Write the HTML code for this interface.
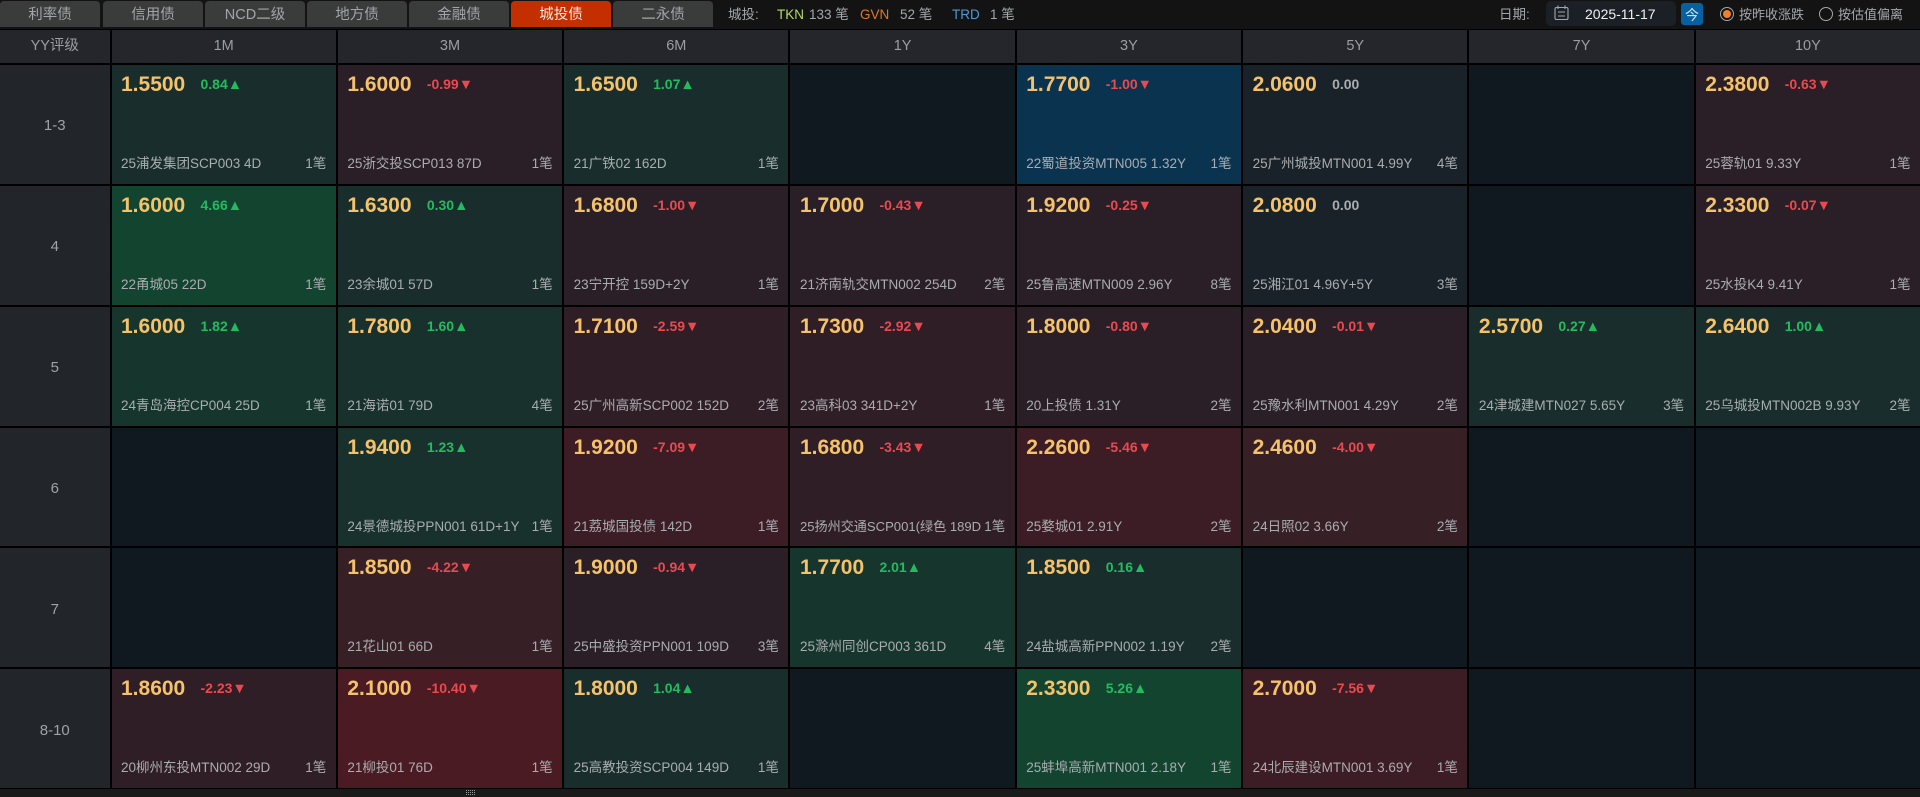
<!DOCTYPE html>
<html lang="zh"><head><meta charset="utf-8"><title>城投债</title>
<style>
*{box-sizing:border-box;margin:0;padding:0}
html,body{width:1920px;height:797px;overflow:hidden;background:#000;font-family:"Liberation Sans","Noto Sans CJK SC",sans-serif;color:#a9adb0}
.top{position:absolute;left:0;top:0;width:1920px;height:29px;background:#131313}
.tab{position:absolute;top:1px;width:100px;height:26px;background:#3a3c3c;border-radius:4px 4px 0 0;text-align:center;font-size:14.5px;line-height:29px;color:#a2a5a6}
.tab.on{background:#c42f00;color:#f5e8e0}
.t{position:absolute;top:6px;font-size:13.5px;line-height:17px;white-space:nowrap;color:#a4a7a9}
.datebox{position:absolute;left:1546px;top:1px;width:130px;height:25px;background:#1b2026;border-radius:5px}
.today{position:absolute;left:1681px;top:3px;width:22px;height:22px;background:#07609f;border-radius:3px}
.radio{position:absolute;top:7px;width:14px;height:14px;border:1px solid #a4a7a9;border-radius:50%}
.radio.on:after{content:"";position:absolute;left:2px;top:2px;width:8px;height:8px;border-radius:50%;background:#f07f27}
.grid{position:absolute;left:0;top:30px;width:1920px;height:758px;display:grid;grid-template-columns:109.5px repeat(8,1fr);grid-template-rows:33px repeat(6,1fr);gap:2px;background:#000}
.h{background:#24262b;text-align:center;font-size:14.5px;line-height:33px;color:#9a9ea1}
.l{background:#222529;display:flex;align-items:center;justify-content:center;font-size:15px;color:#9fa3a6;padding-top:3px}
.c{position:relative;overflow:hidden;white-space:nowrap;background:#111920}
.c b{position:absolute;left:9.5px;top:6px;font-size:21px;line-height:27px;font-weight:700;color:#f5c26c}
.c i{position:absolute;left:89px;top:11px;font-style:normal;font-weight:700;font-size:14px;line-height:17px;color:#24bb60}
.c i.d{color:#ea4950}
.c i.z{color:#a9adb0}
.c em{font-style:normal;font-size:14.5px;line-height:17px}
.c u{position:absolute;left:9.5px;top:90px;text-decoration:none;font-size:13.5px;line-height:18px;color:#a9adb0}
.c u.x{font-size:13.1px}
.c s{position:absolute;right:9.5px;top:90px;text-decoration:none;font-size:13.5px;line-height:18px;color:#a9adb0}
.n{background:#1a2229}.b{background:#0a3350}
.g1{background:#192e2c}.g2{background:#18312c}.g3{background:#124430}.g4{background:#16362d}
.r1{background:#2b1f27}.r2{background:#301e27}.r3{background:#371f26}.r4{background:#3d1d25}.r5{background:#4a1b23}
.bot{position:absolute;left:0;top:789px;width:1920px;height:8px;background:#1a1a1a}
</style></head><body>
<div class="top">
<div class="tab" style="left:0">利率债</div>
<div class="tab" style="left:103px">信用债</div>
<div class="tab" style="left:205px">NCD二级</div>
<div class="tab" style="left:307px">地方债</div>
<div class="tab" style="left:409px">金融债</div>
<div class="tab on" style="left:511px">城投债</div>
<div class="tab" style="left:613px">二永债</div>
<div class="t" style="left:728px">城投:</div>
<div class="t" style="left:777px;color:#b5d96a">TKN</div>
<div class="t" style="left:809px">133 笔</div>
<div class="t" style="left:860px;color:#e07a20">GVN</div>
<div class="t" style="left:900px">52 笔</div>
<div class="t" style="left:952px;color:#4a9ad8">TRD</div>
<div class="t" style="left:990px">1 笔</div>
<div class="t" style="left:1499px">日期:</div>
<div class="datebox"></div>
<svg style="position:absolute;left:1554px;top:5px" width="15" height="15" viewBox="0 0 15 15" fill="none" stroke="#a4a7a9" stroke-width="1.1"><rect x="1" y="2.5" width="13" height="12" rx="1.5"/><path d="M4 .5v3.5M11 .5v3.5M4 7h7M4 11h7"/></svg>
<div class="t" style="left:1585px;color:#f0f0f0;font-size:14px">2025-11-17</div>
<div class="today"></div>
<div class="t" style="left:1685px;top:7px;color:#cfe2f0;font-size:14px">今</div>
<div class="radio on" style="left:1720px"></div>
<div class="t" style="left:1739px;font-size:13px">按昨收涨跌</div>
<div class="radio" style="left:1819px"></div>
<div class="t" style="left:1838px;font-size:13px">按估值偏离</div>
</div>
<div class="grid">
<div class="h">YY评级</div><div class="h">1M</div><div class="h">3M</div><div class="h">6M</div><div class="h">1Y</div><div class="h">3Y</div><div class="h">5Y</div><div class="h">7Y</div><div class="h">10Y</div>

<div class="l">1-3</div>
<div class="c g1"><b>1.5500</b><i>0.84<em>▲</em></i><u>25浦发集团SCP003 4D</u><s>1笔</s></div>
<div class="c r1"><b>1.6000</b><i class="d">-0.99<em>▼</em></i><u>25浙交投SCP013 87D</u><s>1笔</s></div>
<div class="c g1"><b>1.6500</b><i>1.07<em>▲</em></i><u>21广铁02 162D</u><s>1笔</s></div>
<div class="c"></div>
<div class="c b"><b>1.7700</b><i class="d">-1.00<em>▼</em></i><u>22蜀道投资MTN005 1.32Y</u><s>1笔</s></div>
<div class="c n"><b>2.0600</b><i class="z">0.00</i><u>25广州城投MTN001 4.99Y</u><s>4笔</s></div>
<div class="c"></div>
<div class="c r1"><b>2.3800</b><i class="d">-0.63<em>▼</em></i><u>25蓉轨01 9.33Y</u><s>1笔</s></div>

<div class="l">4</div>
<div class="c g3"><b>1.6000</b><i>4.66<em>▲</em></i><u>22甬城05 22D</u><s>1笔</s></div>
<div class="c g1"><b>1.6300</b><i>0.30<em>▲</em></i><u>23余城01 57D</u><s>1笔</s></div>
<div class="c r1"><b>1.6800</b><i class="d">-1.00<em>▼</em></i><u>23宁开控 159D+2Y</u><s>1笔</s></div>
<div class="c r1"><b>1.7000</b><i class="d">-0.43<em>▼</em></i><u>21济南轨交MTN002 254D</u><s>2笔</s></div>
<div class="c r1"><b>1.9200</b><i class="d">-0.25<em>▼</em></i><u>25鲁高速MTN009 2.96Y</u><s>8笔</s></div>
<div class="c n"><b>2.0800</b><i class="z">0.00</i><u>25湘江01 4.96Y+5Y</u><s>3笔</s></div>
<div class="c"></div>
<div class="c r1"><b>2.3300</b><i class="d">-0.07<em>▼</em></i><u>25水投K4 9.41Y</u><s>1笔</s></div>

<div class="l">5</div>
<div class="c g4"><b>1.6000</b><i>1.82<em>▲</em></i><u>24青岛海控CP004 25D</u><s>1笔</s></div>
<div class="c g2"><b>1.7800</b><i>1.60<em>▲</em></i><u>21海诺01 79D</u><s>4笔</s></div>
<div class="c r2"><b>1.7100</b><i class="d">-2.59<em>▼</em></i><u>25广州高新SCP002 152D</u><s>2笔</s></div>
<div class="c r2"><b>1.7300</b><i class="d">-2.92<em>▼</em></i><u>23高科03 341D+2Y</u><s>1笔</s></div>
<div class="c r1"><b>1.8000</b><i class="d">-0.80<em>▼</em></i><u>20上投债 1.31Y</u><s>2笔</s></div>
<div class="c r1"><b>2.0400</b><i class="d">-0.01<em>▼</em></i><u>25豫水利MTN001 4.29Y</u><s>2笔</s></div>
<div class="c g1"><b>2.5700</b><i>0.27<em>▲</em></i><u>24津城建MTN027 5.65Y</u><s>3笔</s></div>
<div class="c g1"><b>2.6400</b><i>1.00<em>▲</em></i><u>25乌城投MTN002B 9.93Y</u><s>2笔</s></div>

<div class="l">6</div>
<div class="c"></div>
<div class="c g2"><b>1.9400</b><i>1.23<em>▲</em></i><u>24景德城投PPN001 61D+1Y</u><s>1笔</s></div>
<div class="c r4"><b>1.9200</b><i class="d">-7.09<em>▼</em></i><u>21荔城国投债 142D</u><s>1笔</s></div>
<div class="c r2"><b>1.6800</b><i class="d">-3.43<em>▼</em></i><u class="x">25扬州交通SCP001(绿色 189D</u><s>1笔</s></div>
<div class="c r4"><b>2.2600</b><i class="d">-5.46<em>▼</em></i><u>25婺城01 2.91Y</u><s>2笔</s></div>
<div class="c r3"><b>2.4600</b><i class="d">-4.00<em>▼</em></i><u>24日照02 3.66Y</u><s>2笔</s></div>
<div class="c"></div>
<div class="c"></div>

<div class="l">7</div>
<div class="c"></div>
<div class="c r3"><b>1.8500</b><i class="d">-4.22<em>▼</em></i><u>21花山01 66D</u><s>1笔</s></div>
<div class="c r1"><b>1.9000</b><i class="d">-0.94<em>▼</em></i><u>25中盛投资PPN001 109D</u><s>3笔</s></div>
<div class="c g4"><b>1.7700</b><i>2.01<em>▲</em></i><u>25滁州同创CP003 361D</u><s>4笔</s></div>
<div class="c g1"><b>1.8500</b><i>0.16<em>▲</em></i><u>24盐城高新PPN002 1.19Y</u><s>2笔</s></div>
<div class="c"></div>
<div class="c"></div>
<div class="c"></div>

<div class="l">8-10</div>
<div class="c r2"><b>1.8600</b><i class="d">-2.23<em>▼</em></i><u>20柳州东投MTN002 29D</u><s>1笔</s></div>
<div class="c r5"><b>2.1000</b><i class="d">-10.40<em>▼</em></i><u>21柳投01 76D</u><s>1笔</s></div>
<div class="c g1"><b>1.8000</b><i>1.04<em>▲</em></i><u>25高教投资SCP004 149D</u><s>1笔</s></div>
<div class="c"></div>
<div class="c g3"><b>2.3300</b><i>5.26<em>▲</em></i><u>25蚌埠高新MTN001 2.18Y</u><s>1笔</s></div>
<div class="c r4"><b>2.7000</b><i class="d">-7.56<em>▼</em></i><u>24北辰建设MTN001 3.69Y</u><s>1笔</s></div>
<div class="c"></div>
<div class="c"></div>
</div>
<div class="bot"><svg style="position:absolute;left:466px;top:1px" width="9" height="6" viewBox="0 0 9 6" fill="none" stroke="#9a9a9a" stroke-width="1" stroke-dasharray="1 1"><path d="M0 .5h9M0 2.5h9M0 4.5h9"/></svg></div>
</body></html>
